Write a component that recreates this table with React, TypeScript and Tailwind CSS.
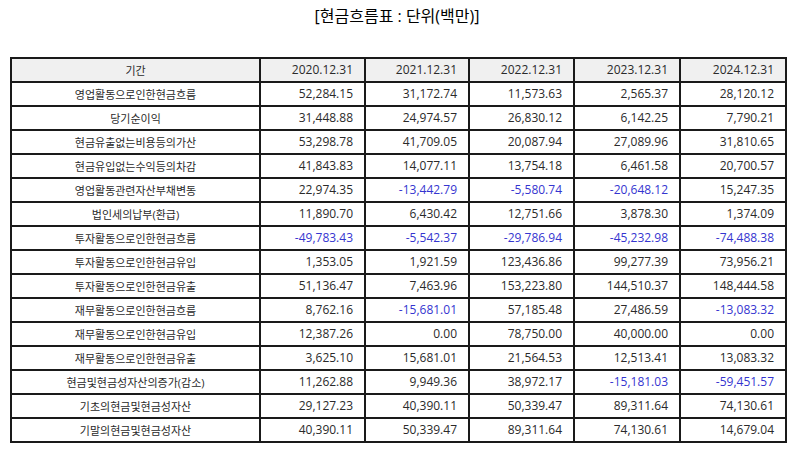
import React from "react";

const years = ["2020.12.31", "2021.12.31", "2022.12.31", "2023.12.31", "2024.12.31"];

const rows: [string, string[]][] = [
  ["영업활동으로인한현금흐름", ["52,284.15", "31,172.74", "11,573.63", "2,565.37", "28,120.12"]],
  ["당기순이익", ["31,448.88", "24,974.57", "26,830.12", "6,142.25", "7,790.21"]],
  ["현금유출없는비용등의가산", ["53,298.78", "41,709.05", "20,087.94", "27,089.96", "31,810.65"]],
  ["현금유입없는수익등의차감", ["41,843.83", "14,077.11", "13,754.18", "6,461.58", "20,700.57"]],
  ["영업활동관련자산부채변동", ["22,974.35", "-13,442.79", "-5,580.74", "-20,648.12", "15,247.35"]],
  ["법인세의납부(환급)", ["11,890.70", "6,430.42", "12,751.66", "3,878.30", "1,374.09"]],
  ["투자활동으로인한현금흐름", ["-49,783.43", "-5,542.37", "-29,786.94", "-45,232.98", "-74,488.38"]],
  ["투자활동으로인한현금유입", ["1,353.05", "1,921.59", "123,436.86", "99,277.39", "73,956.21"]],
  ["투자활동으로인한현금유출", ["51,136.47", "7,463.96", "153,223.80", "144,510.37", "148,444.58"]],
  ["재무활동으로인한현금흐름", ["8,762.16", "-15,681.01", "57,185.48", "27,486.59", "-13,083.32"]],
  ["재무활동으로인한현금유입", ["12,387.26", "0.00", "78,750.00", "40,000.00", "0.00"]],
  ["재무활동으로인한현금유출", ["3,625.10", "15,681.01", "21,564.53", "12,513.41", "13,083.32"]],
  ["현금및현금성자산의증가(감소)", ["11,262.88", "9,949.36", "38,972.17", "-15,181.03", "-59,451.57"]],
  ["기초의현금및현금성자산", ["29,127.23", "40,390.11", "50,339.47", "89,311.64", "74,130.61"]],
  ["기말의현금및현금성자산", ["40,390.11", "50,339.47", "89,311.64", "74,130.61", "14,679.04"]],
];

const colW = ["w-[249px]", "w-[105px]", "w-[104px]", "w-[105px]", "w-[106px]", "w-[106px]"];

const num = { fontFamily: '"Open Sans", "Noto Sans CJK KR", sans-serif' };

export default function App() {
  return (
    <div
      className="w-[794px] h-[452px] bg-white text-[#2a2a2a]"
      style={{ fontFamily: '"Open Sans", "Noto Sans CJK KR", sans-serif' }}
    >
      <div className="h-[57px] pt-[5px] text-center text-[16px] leading-[22px] text-black">
        [현금흐름표 : 단위(백만)]
      </div>
      <div className="px-[10px]">
        <table className="w-[776px] border-collapse table-fixed text-[11px] leading-none">
          <colgroup>
            {colW.map((c, i) => (
              <col key={i} className={c} />
            ))}
          </colgroup>
          <thead>
            <tr className="h-[24px] bg-[#f0f0f0]">
              <th className="border-2 border-[#1a1a1a] font-normal text-center">기간</th>
              {years.map((y) => (
                <th
                  key={y}
                  className="border-2 border-[#1a1a1a] font-normal text-right pr-[11px] text-[12px]"
                  style={num}
                >
                  {y}
                </th>
              ))}
            </tr>
          </thead>
          <tbody>
            {rows.map(([label, vals]) => (
              <tr key={label} className="h-[24px]">
                <td className="border-2 border-[#1a1a1a] text-center">{label}</td>
                {vals.map((v, i) => (
                  <td
                    key={i}
                    style={num}
                    className={
                      v.startsWith("-")
                        ? "border-2 border-[#1a1a1a] text-right pr-[11px] text-[12px] text-[#3535d0]"
                        : "border-2 border-[#1a1a1a] text-right pr-[11px] text-[12px]"
                    }
                  >
                    {v}
                  </td>
                ))}
              </tr>
            ))}
          </tbody>
        </table>
      </div>
    </div>
  );
}
